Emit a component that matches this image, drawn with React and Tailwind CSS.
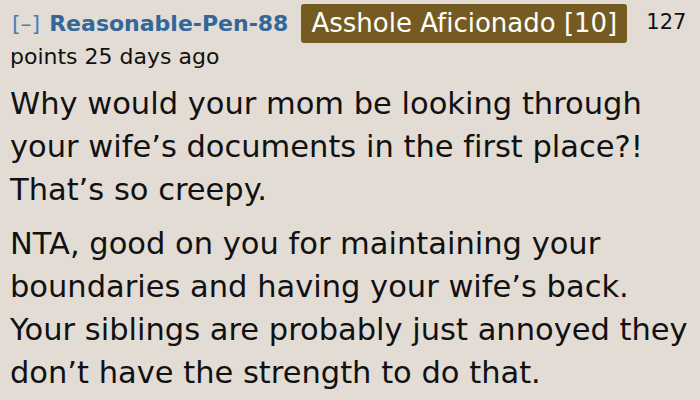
import React from 'react';

const font = { fontFamily: '"DejaVu Sans", Verdana, sans-serif' };

export default function App() {
  return (
    <div className="w-[700px] h-[400px] overflow-hidden bg-[#e2dcd5] pl-[10px] pr-[10px] text-[#111] [font-variant-ligatures:none]" style={font}>
      {/* Tagline */}
      <div className="flex items-center h-[43px] pt-[3px] whitespace-nowrap">
        <span className="shrink-0 text-[22px] text-[#4a7fb5] ml-[2px] mr-[9px]">[–]</span>
        <span className="shrink-0 text-[22px] font-bold text-[#336699]">Reasonable-Pen-88</span>
        <span className="shrink-0 ml-[13px] h-[39px] px-[10px] flex items-center rounded-[3px] bg-[#755b22] text-white text-[26px]">
          Asshole Aficionado [10]
        </span>
        <span className="shrink-0 ml-[19px] text-[21px]">127</span>
      </div>
      <div className="text-[22px] leading-[28px]">points 25 days ago</div>

      {/* Body */}
      <div className="mt-[11px] text-[30.5px] leading-[43px]">
        <p>Why would your mom be looking through your wife’s documents in the first place?! That’s so creepy.</p>
        <p className="mt-[11px]">NTA, good on you for maintaining your boundaries and having your wife’s back. Your siblings are probably just annoyed they don’t have the strength to do that.</p>
      </div>
    </div>
  );
}
